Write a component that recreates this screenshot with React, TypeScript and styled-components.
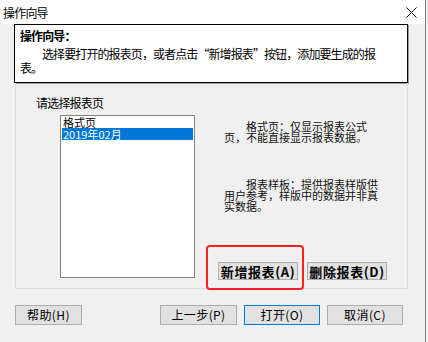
import React from "react";
import styled, { createGlobalStyle } from "styled-components";

const GlobalStyle = createGlobalStyle`
  html, body {
    margin: 0;
    padding: 0;
    background: #f0f0f0;
  }
  * {
    box-sizing: border-box;
  }
`;

const cjk = `"Noto Sans CJK SC", "Liberation Sans", sans-serif`;

const Window = styled.div`
  width: 426px;
  height: 342px;
  background: #f0f0f0;
  border-right: 1px solid #7d7d7d;
  font-family: ${cjk};
  color: #000;
  overflow: hidden;
`;

const TitleBar = styled.div`
  height: 24px;
  background: #fff;
  display: flex;
  align-items: center;
  justify-content: space-between;
  padding: 0 8px 0 3px;
  font-size: 12px;
  letter-spacing: -0.8px;
`;

const Body = styled.div`
  padding: 0 17px 0 14px;
`;

const HeaderBox = styled.div`
  height: 59px;
  background: #fff;
  border: 1px solid #000;
  box-shadow: 1px 1px 0 #9a9a9a;
  padding: 4px 5px 0 5px;
  font-size: 12px;
  line-height: 14px;
  letter-spacing: -0.9px;
`;

const HeaderTitle = styled.div`
  font-weight: 700;
  margin-bottom: 4px;
`;

const HeaderLine = styled.div<{ $indent?: boolean }>`
  white-space: nowrap;
  padding-left: ${(p) => (p.$indent ? "22px" : "0")};
`;

const Group = styled.div`
  margin-left: 1px;
  height: 206px;
  border: 1px solid #dcdcdc;
  border-top: none;
  display: flex;
`;

const LeftColumn = styled.div`
  padding: 13px 0 0 20px;
  display: flex;
  flex-direction: column;
`;

const Label = styled.div`
  font-size: 12px;
  line-height: 14px;
  letter-spacing: -0.8px;
`;

const ListBox = styled.div`
  margin: 5px 0 0 24px;
  width: 135px;
  height: 163px;
  background: #fff;
  border: 1px solid #828282;
  padding: 0 1px;
`;

const ListItem = styled.div<{ $selected?: boolean }>`
  font-size: 11px;
  line-height: 12px;
  padding-left: 1px;
  white-space: nowrap;
  background: ${(p) => (p.$selected ? "#0078d7" : "transparent")};
  color: ${(p) => (p.$selected ? "#fff" : "#000")};
`;

const RightColumn = styled.div`
  margin-left: 23px;
  padding: 38px 0 8px 0;
  display: flex;
  flex-direction: column;
`;

const Note = styled.p<{ $gap?: number }>`
  margin: ${(p) => p.$gap ?? 0}px 0 0 6px;
  width: 156px;
  font-size: 11px;
  line-height: 11px;
  text-indent: 22px;
  color: #111;
`;

const ActionRow = styled.div`
  margin-top: auto;
  display: flex;
  gap: 9px;
`;

const Anchor = styled.div`
  position: relative;
`;

const Highlight = styled.span`
  position: absolute;
  left: -12px;
  top: -17px;
  width: 98px;
  height: 45px;
  border: 2.5px solid #ff2020;
  border-radius: 4px;
  pointer-events: none;
`;

const Button = styled.button<{ $w: number; $h?: number; $bold?: boolean; $default?: boolean }>`
  width: ${(p) => p.$w}px;
  height: ${(p) => p.$h ?? 20}px;
  padding: 0;
  margin: 0;
  background: #e1e1e1;
  border: 1px solid ${(p) => (p.$default ? "#0078d7" : "#adadad")};
  font-family: ${cjk};
  font-size: ${(p) => (p.$bold ? "13px" : "12px")};
  font-weight: ${(p) => (p.$bold ? 700 : 400)};
  letter-spacing: ${(p) => (p.$bold ? "0.6px" : "0.4px")};
  color: #000;
  display: flex;
  align-items: center;
  justify-content: center;
  line-height: 1;
`;

const Footer = styled.div`
  margin-top: 16px;
  padding: 0 5px 0 1px;
  display: flex;
  justify-content: space-between;
`;

const FooterGroup = styled.div`
  display: flex;
  gap: 7px;
`;

function CloseIcon() {
  return (
    <svg width="11" height="11" viewBox="0 0 11 11">
      <path d="M0.5 0.5 L10.5 10.5 M10.5 0.5 L0.5 10.5" stroke="#000" strokeWidth="1" />
    </svg>
  );
}

export default function App() {
  return (
    <>
      <GlobalStyle />
      <Window>
        <TitleBar>
          <span>操作向导</span>
          <CloseIcon />
        </TitleBar>
        <Body>
          <HeaderBox>
            <HeaderTitle>操作向导：</HeaderTitle>
            <HeaderLine $indent>
              选择要打开的报表页，或者点击“新增报表”按钮，添加要生成的报
            </HeaderLine>
            <HeaderLine>表。</HeaderLine>
          </HeaderBox>
          <Group>
            <LeftColumn>
              <Label>请选择报表页</Label>
              <ListBox>
                <ListItem>格式页</ListItem>
                <ListItem $selected>2019年02月</ListItem>
              </ListBox>
            </LeftColumn>
            <RightColumn>
              <Note>格式页：仅显示报表公式页，不能直接显示报表数据。</Note>
              <Note $gap={36}>报表样板：提供报表样版供用户参考，样版中的数据并非真实数据。</Note>
              <ActionRow>
                <Anchor>
                  <Button $w={80} $h={18} $bold>新增报表(A)</Button>
                  <Highlight />
                </Anchor>
                <Button $w={80} $h={18} $bold>删除报表(D)</Button>
              </ActionRow>
            </RightColumn>
          </Group>
          <Footer>
            <Button $w={67}>帮助(H)</Button>
            <FooterGroup>
              <Button $w={77}>上一步(P)</Button>
              <Button $w={76} $default>打开(O)</Button>
              <Button $w={76}>取消(C)</Button>
            </FooterGroup>
          </Footer>
        </Body>
      </Window>
    </>
  );
}
